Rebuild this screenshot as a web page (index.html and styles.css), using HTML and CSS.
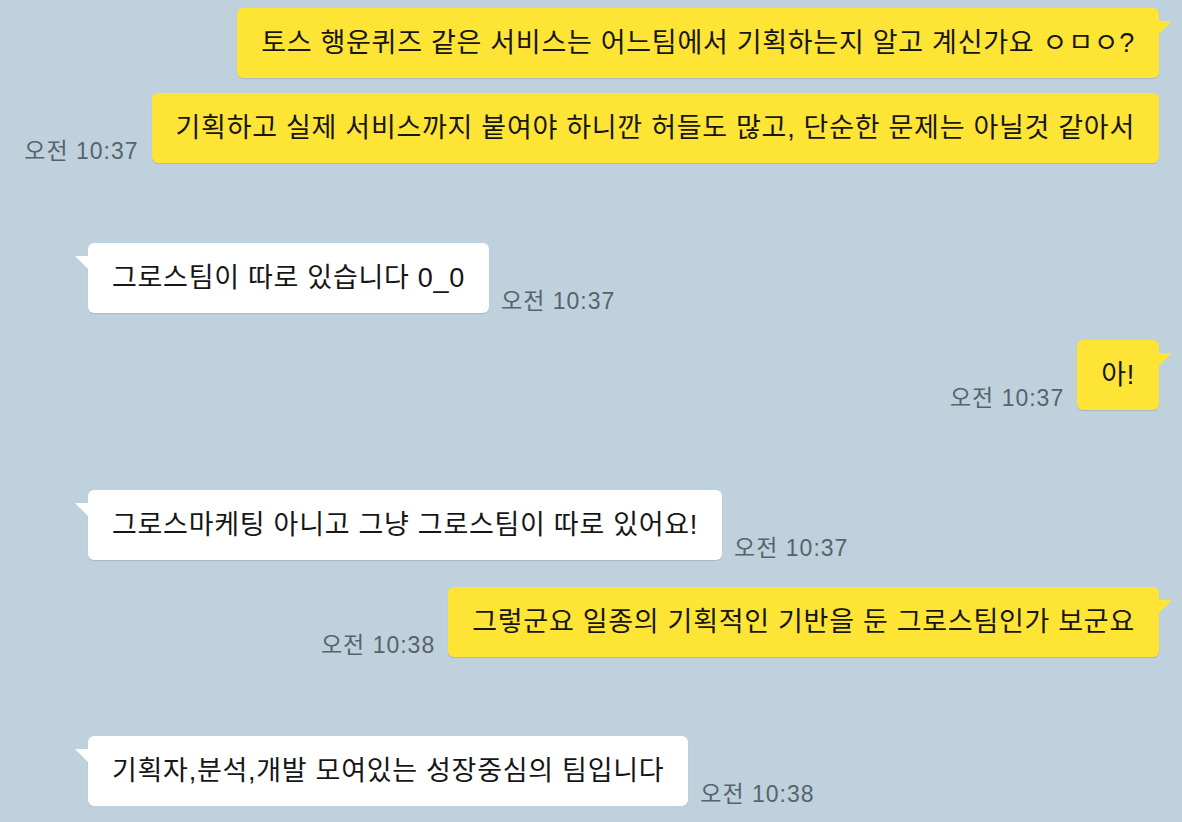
FILE: index.html
```html
<!DOCTYPE html>
<html lang="ko">
<head>
    <meta charset="UTF-8">
    <meta name="viewport" content="width=device-width, initial-scale=1.0">
    <title>채팅</title>
    <link rel="stylesheet" href="styles.css">
</head>
<body>

<main class="chat">
    <div class="row mine">
        <div class="bubble tail">토스 행운퀴즈 같은 서비스는 어느팀에서 기획하는지 알고 계신가요 ㅇㅁㅇ?</div>
    </div>
    <div class="row mine same">
        <span class="time">오전 10:37</span>
        <div class="bubble">기획하고 실제 서비스까지 붙여야 하니깐 허들도 많고, 단순한 문제는 아닐것 같아서</div>
    </div>

    <div class="row yours">
        <div class="bubble tail">그로스팀이 따로 있습니다 0_0</div>
        <span class="time">오전 10:37</span>
    </div>

    <div class="row mine">
        <span class="time">오전 10:37</span>
        <div class="bubble tail">아!</div>
    </div>

    <div class="row yours">
        <div class="bubble tail">그로스마케팅 아니고 그냥 그로스팀이 따로 있어요!</div>
        <span class="time">오전 10:37</span>
    </div>

    <div class="row mine">
        <span class="time">오전 10:38</span>
        <div class="bubble tail">그렇군요 일종의 기획적인 기반을 둔 그로스팀인가 보군요</div>
    </div>

    <div class="row yours">
        <div class="bubble tail">기획자,분석,개발 모여있는 성장중심의 팀입니다</div>
        <span class="time">오전 10:38</span>
    </div>
</main>

</body>
</html>
```

FILE: styles.css
```css
body {
    margin: 0;
    padding: 0;
    background-color: #bfd1dc;
    font-family: "Liberation Sans", "Noto Sans CJK KR", sans-serif;
    overflow: hidden;
}
.chat {
    display: flex;
    flex-direction: column;
    padding: 8px 23px 0 0;
}
.row {
    display: flex;
    align-items: flex-end;
    gap: 13px;
}
.row.mine {
    justify-content: flex-end;
    margin-top: 27px;
}
.row.mine:first-child {
    margin-top: 0;
}
.row.same {
    margin-top: 15px;
}
.row.yours {
    padding-left: 88px;
    margin-top: 80px;
    gap: 12px;
}
.row.yours:last-child {
    margin-top: 79px;
}
.bubble {
    position: relative;
    padding: 17px 24px;
    font-size: 27px;
    line-height: 36px;
    letter-spacing: 0.72px;
    color: #161616;
    border-radius: 6px;
    white-space: nowrap;
    box-shadow: 0 1px 1px rgba(0, 0, 0, 0.12);
}
.mine .bubble {
    background-color: #fee435;
}
.yours .bubble {
    background-color: #ffffff;
}
.bubble.tail::before {
    content: "";
    position: absolute;
    top: 13px;
    width: 14px;
    height: 14px;
}
.mine .bubble.tail::before {
    right: -13px;
    background-color: #fee435;
    clip-path: polygon(0 0, 100% 0, 0 100%);
}
.yours .bubble.tail::before {
    left: -13px;
    background-color: #ffffff;
    clip-path: polygon(0 0, 100% 0, 100% 100%);
}
.time {
    font-size: 23px;
    line-height: 26px;
    letter-spacing: 1px;
    color: #58636c;
    white-space: nowrap;
    margin-bottom: -1px;
}
```
